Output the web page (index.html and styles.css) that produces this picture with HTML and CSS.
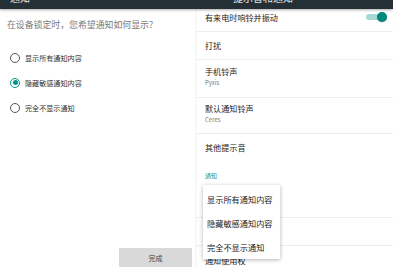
FILE: index.html
```html
<!DOCTYPE html>
<html lang="zh">
<head>
<meta charset="utf-8">
<link rel="stylesheet" href="styles.css">
</head>
<body>
<div class="screen">
  <div class="appbar">
    <div class="bar-left"><span>通知</span></div>
    <div class="bar-right"><span>提示音和通知</span></div>
  </div>
  <div class="main">
    <div class="dialog">
      <div class="question">在设备锁定时，您希望通知如何显示?</div>
      <div class="options">
        <div class="option"><span class="radio"></span><span class="label">显示所有通知内容</span></div>
        <div class="option"><span class="radio checked"></span><span class="label">隐藏敏感通知内容</span></div>
        <div class="option"><span class="radio"></span><span class="label">完全不显示通知</span></div>
      </div>
      <div class="done">完成</div>
    </div>
    <div class="settings">
      <div class="row first">
        <span class="title">有来电时响铃并振动</span>
        <span class="toggle"><span class="thumb"></span></span>
      </div>
      <div class="row">
        <span class="title">打扰</span>
      </div>
      <div class="row two">
        <span class="title">手机铃声</span>
        <span class="sub">Pyxis</span>
      </div>
      <div class="row two short">
        <span class="title">默认通知铃声</span>
        <span class="sub">Ceres</span>
      </div>
      <div class="row nodiv">
        <span class="title">其他提示音</span>
      </div>
      <div class="header">通知</div>
      <div class="row tall"></div>
      <div class="row"></div>
      <div class="row last">
        <span class="title">通知使用权</span>
      </div>
      <div class="menu">
        <div class="item">显示所有通知内容</div>
        <div class="item">隐藏敏感通知内容</div>
        <div class="item">完全不显示通知</div>
      </div>
    </div>
  </div>
</div>
</body>
</html>
```
FILE: styles.css
```css
* { box-sizing: border-box; }
html, body { margin: 0; padding: 0; background: #fff; }
body {
  font-family: "Noto Sans CJK SC", "Noto Sans", Roboto, sans-serif;
  width: 393px;
  height: 267px;
  overflow: hidden;
}
.screen {
  width: 393px;
  height: 267px;
  display: flex;
  flex-direction: column;
  overflow: hidden;
}
.appbar {
  position: relative;
  z-index: 2;
  height: 9px;
  flex: none;
  background: #243036;
  display: flex;
  overflow: hidden;
  box-shadow: 0 1px 3px rgba(0,0,0,0.35);
  color: #fff;
  font-size: 10px;
}
.bar-left {
  width: 195px;
  padding-left: 10px;
  display: flex;
  align-items: flex-start;
}
.bar-right {
  flex: 1;
  padding-left: 38px;
  display: flex;
  align-items: flex-start;
}
.appbar span {
  line-height: 10px;
  margin-top: -7px;
  opacity: 0.9;
}
.main {
  flex: 1;
  display: flex;
  min-height: 0;
}
.dialog {
  width: 195px;
  flex: none;
  display: flex;
  flex-direction: column;
  position: relative;
  z-index: 1;
  box-shadow: 1px 0 2px rgba(0,0,0,0.06);
  background: #fff;
}
.question {
  margin-top: 10px;
  padding-left: 7px;
  font-size: 8.9px;
  line-height: 12px;
  color: #7a7a7a;
  white-space: nowrap;
}
.options {
  margin-top: 14px;
  display: flex;
  flex-direction: column;
}
.option {
  height: 25px;
  display: flex;
  align-items: center;
  padding-left: 10px;
}
.radio {
  width: 10px;
  height: 10px;
  border-radius: 50%;
  border: 1px solid #555;
  flex: none;
  position: relative;
}
.radio.checked {
  border-color: #009688;
}
.radio.checked::after {
  content: "";
  position: absolute;
  left: 1.5px;
  top: 1.5px;
  width: 5px;
  height: 5px;
  border-radius: 50%;
  background: #009688;
}
.label {
  margin-left: 5px;
  font-size: 7.1px;
  color: #333;
  white-space: nowrap;
}
.done {
  margin-top: auto;
  align-self: flex-end;
  margin-right: 3px;
  width: 73px;
  height: 19px;
  background: #d9d9d9;
  color: #444;
  font-size: 7px;
  display: flex;
  align-items: center;
  justify-content: center;
}
.settings {
  flex: 1;
  position: relative;
  display: flex;
  flex-direction: column;
  min-width: 0;
}
.row {
  margin-left: 2px;
  padding-left: 8px;
  height: 28px;
  flex: none;
  border-bottom: 1px solid #ededed;
  display: flex;
  flex-direction: column;
  justify-content: center;
  position: relative;
}
.row.first { margin-top: -5px; }
.row.two { height: 38px; justify-content: flex-start; padding-top: 6px; }
.row.two.short { height: 36px; padding-top: 5px; }
.row.nodiv { border-bottom: none; }
.row.tall { height: 30px; }
.row.last { padding-top: 9px; justify-content: flex-start; }
.title {
  font-size: 8.1px;
  line-height: 12px;
  color: #222;
  white-space: nowrap;
}
.sub {
  font-size: 6px;
  line-height: 10px;
  color: #7a7a7a;
}
.header {
  height: 26px;
  flex: none;
  padding-left: 10px;
  display: flex;
  align-items: center;
  font-size: 6px;
  color: #009688;
}
.toggle {
  position: absolute;
  right: 8px;
  top: 10px;
  width: 19px;
  height: 6px;
  border-radius: 3px;
  background: #a5d9d3;
}
.thumb {
  position: absolute;
  right: -2px;
  top: -2px;
  width: 10px;
  height: 10px;
  border-radius: 50%;
  background: #00897b;
  box-shadow: 0 0.5px 1px rgba(0,0,0,0.3);
}
.menu {
  position: absolute;
  left: 8px;
  top: 176px;
  width: 77px;
  height: 74px;
  background: #fff;
  box-shadow: 0 1px 4px rgba(0,0,0,0.3);
  padding-top: 2px;
  z-index: 3;
}
.item {
  height: 24px;
  display: flex;
  align-items: center;
  padding-left: 4px;
  font-size: 8.2px;
  color: #222;
  white-space: nowrap;
}
```
